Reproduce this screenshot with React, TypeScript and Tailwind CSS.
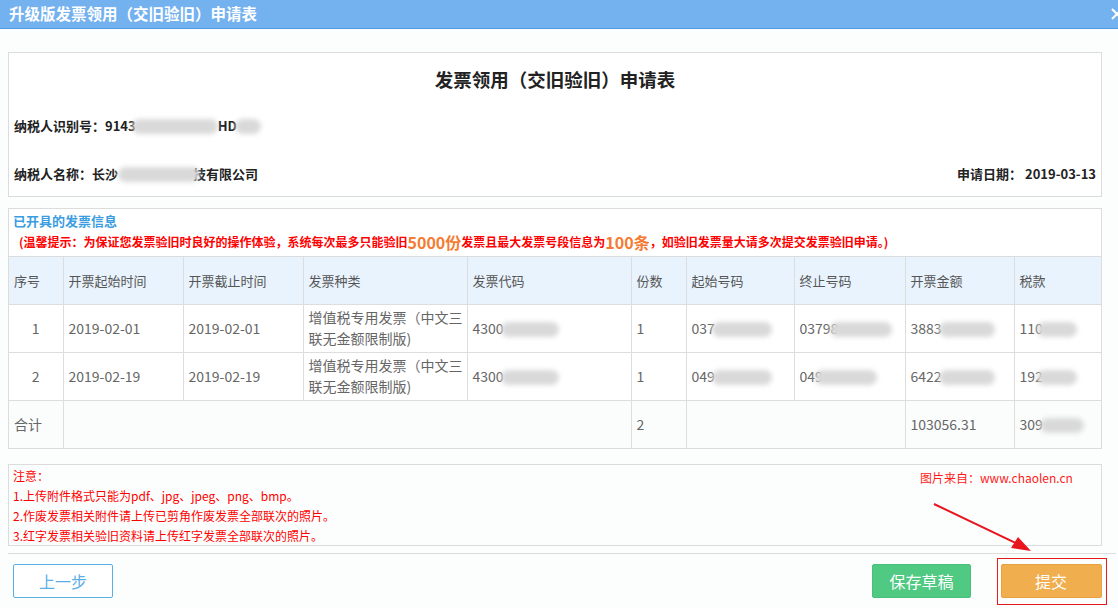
import React from 'react'

const FONT = { fontFamily: '"Noto Sans CJK SC", "Noto Sans", sans-serif' }

type Row = {
  no: string
  start: string
  end: string
  code: string
  count: string
  from: string
  to: string
  amount: string
  tax: string
}

const ROWS: Row[] = [
  { no: '1', start: '2019-02-01', end: '2019-02-01', code: '4300', count: '1', from: '037', to: '03798', amount: '3883', tax: '110' },
  { no: '2', start: '2019-02-19', end: '2019-02-19', code: '4300', count: '1', from: '049', to: '049', amount: '6422', tax: '192' },
]

// grey smudge used where the original screenshot was masked
function Blur({ w, className = '' }: { w: number; className?: string }) {
  return (
    <span
      className={`relative z-10 inline-block h-[15px] rounded-full bg-[#d9d9d9] blur-[2.5px] align-middle ${className}`}
      style={{ width: w }}
    />
  )
}

const HEAD = ['序号', '开票起始时间', '开票截止时间', '发票种类', '发票代码', '份数', '起始号码', '终止号码', '开票金额', '税款']
const WIDTHS = ['w-[54px]', 'w-[120px]', 'w-[120px]', 'w-[164px]', 'w-[164px]', 'w-[55px]', 'w-[108px]', 'w-[111px]', 'w-[109px]', '']

export default function App() {
  const td = 'border border-[#dddddd] px-[5px] text-[#666]'
  return (
    <div className="relative h-[608px] w-full overflow-hidden bg-[#fcfefe]" style={FONT}>
      {/* dialog title */}
      <div className="relative flex h-[29px] items-center overflow-hidden border-b border-[#4d9be4] bg-[#74b1ef] pl-[9px]">
        <span className="text-[15.5px] font-bold text-white">升级版发票领用（交旧验旧）申请表</span>
        <svg className="absolute left-[1110px] top-[7px]" width="14" height="14" viewBox="0 0 14 14">
          <path d="M2 2 L12 12 M12 2 L2 12" stroke="#fff" strokeWidth="2" />
        </svg>
      </div>

      <div className="pl-[8px] pr-[16px]">
        {/* header panel */}
        <div className="mt-[23px] h-[145px] border border-[#dcdcdc] bg-white px-[5px] pt-[15px]">
          <div className="h-[22px] text-center text-[18.5px] font-bold leading-[22px] text-[#222]">发票领用（交旧验旧）申请表</div>
          <div className="mt-[26px] flex h-[20px] items-center text-[13px] font-bold text-[#222]">
            纳税人识别号：9143
            <Blur w={86} className="-ml-[4px]" />
            HD
            <Blur w={26} className="-ml-[2px]" />
          </div>
          <div className="mt-[28px] flex h-[20px] items-center justify-between text-[13px] font-bold text-[#222]">
            <span className="flex items-center">
              纳税人名称：长沙
              <Blur w={82} className="-mr-[7px]" />
              技有限公司
            </span>
            <span>申请日期：&nbsp;2019-03-13</span>
          </div>
        </div>

        {/* invoice panel */}
        <div className="mt-[11px] border border-[#dcdcdc] bg-white">
          <div className="flex h-[24px] items-center pl-[4px] text-[13px] font-bold text-[#3a9de1]">已开具的发票信息</div>
          <div className="flex h-[18px] items-center pl-[10px] text-[12px] font-bold text-[#ff0000]">
            (温馨提示：为保证您发票验旧时良好的操作体验，系统每次最多只能验旧
            <span className="text-[16px] text-[#f57b32]">5000份</span>
            发票且最大发票号段信息为
            <span className="text-[16px] text-[#f57b32]">100条</span>
            ，如验旧发票量大请多次提交发票验旧申请。)
          </div>
          <div className="mt-[5px] border-t border-[#dddddd]">
            <table className="w-full border-collapse border-hidden">
              <thead>
                <tr className="h-[47px] bg-[#e8f3fd]">
                  {HEAD.map((h, i) => (
                    <th key={h} className={`${WIDTHS[i]} border border-[#dddddd] px-[5px] text-left text-[13px] font-normal text-[#555]`}>
                      {h}
                    </th>
                  ))}
                </tr>
              </thead>
              <tbody className="text-[14px]">
                {ROWS.map(r => (
                  <tr key={r.no} className="h-[48px] bg-white">
                    <td className={`${td} text-center`}>{r.no}</td>
                    <td className={td}>{r.start}</td>
                    <td className={td}>{r.end}</td>
                    <td className="border border-[#dddddd] pl-[5px] pr-[2px] leading-[21px] text-[#666]">增值税专用发票（中文三联无金额限制版)</td>
                    <td className={td}>{r.code}<Blur w={58} className="-ml-[3px]" /></td>
                    <td className={td}>{r.count}</td>
                    <td className={td}>{r.from}<Blur w={60} className="-ml-[3px]" /></td>
                    <td className={td}>{r.to}<Blur w={62} className="-ml-[8px]" /></td>
                    <td className={td}>{r.amount}<Blur w={56} className="-ml-[3px]" /></td>
                    <td className={td}>{r.tax}<Blur w={40} className="-ml-[6px]" /></td>
                  </tr>
                ))}
                <tr className="h-[48px] bg-[#fbfdfd]">
                  <td className={td}>合计</td>
                  <td className={td} colSpan={4} />
                  <td className={td}>2</td>
                  <td className={td} colSpan={2} />
                  <td className={td}>103056.31</td>
                  <td className={td}>309<Blur w={44} className="-ml-[3px]" /></td>
                </tr>
              </tbody>
            </table>
          </div>
        </div>

        {/* notes */}
        <div className="mt-[15px] h-[82px] border border-[#dcdcdc] bg-[#fcfefe] pl-[4px] pt-[1px] text-[12px] leading-[20px] text-[#ff0000]">
          <div>注意：</div>
          <div>1.上传附件格式只能为pdf、jpg、jpeg、png、bmp。</div>
          <div>2.作废发票相关附件请上传已剪角作废发票全部联次的照片。</div>
          <div>3.红字发票相关验旧资料请上传红字发票全部联次的照片。</div>
        </div>
      </div>

      {/* footer */}
      <div className="ml-[8px] mr-[2px] mt-[7px] border-t border-[#dddddd]" />
      <div className="mt-[10px] flex h-[34px] items-center pl-[13px] pr-[11px]">
        <button className="h-[34px] w-[100px] rounded-[2px] border border-[#5aafe8] bg-white text-[16px] text-[#5aafe8]">上一步</button>
        <div className="flex-1" />
        <button className="h-[34px] w-[99px] rounded-[2px] border border-[#47c079] bg-[#50c982] text-[16px] text-white">保存草稿</button>
        <div className="ml-[26px] flex h-[47px] w-[110px] items-center justify-center border border-[#e51a1a] pr-[2px]">
          <button className="h-[34px] w-[101px] rounded-[2px] border border-[#e9a13f] bg-[#f0ae4e] text-[16px] text-white">提交</button>
        </div>
      </div>

      {/* watermark */}
      <div className="absolute left-[920px] top-[469px] text-[12px] text-[#ff1a1a]">图片来自：www.chaolen.cn</div>

      {/* red arrow annotation */}
      <svg className="absolute left-0 top-0" width="1118" height="608" viewBox="0 0 1118 608" style={{ pointerEvents: 'none' }}>
        <line x1="934" y1="504" x2="1018" y2="544" stroke="#e8141e" strokeWidth="2" />
        <polygon points="1031,551 1011,548 1018,537" fill="#e8141e" />
      </svg>
    </div>
  )
}
